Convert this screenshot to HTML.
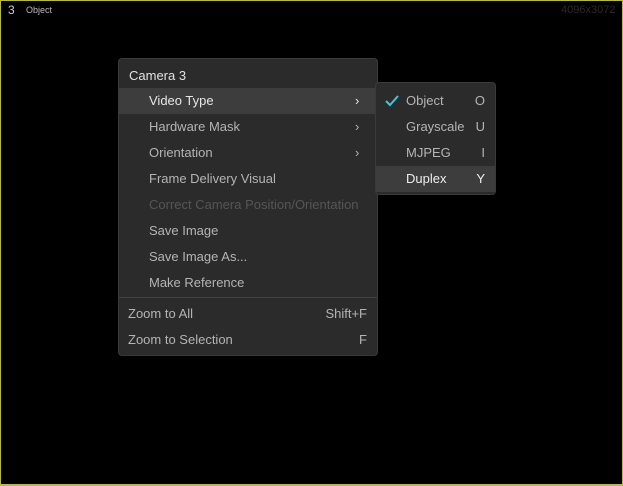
<!DOCTYPE html>
<html><head><style>
*{margin:0;padding:0;box-sizing:border-box}
body{width:623px;height:486px;background:#000;overflow:hidden;position:relative;font-family:"Liberation Sans",sans-serif}
.frame{position:absolute;left:0;top:0;width:623px;height:486px;border:1px solid #b8b84a;border-bottom-width:2px}
.t{position:absolute;white-space:nowrap}
.menu{position:absolute;left:118px;top:58px;width:260px;height:298px;background:#2b2b2b;border-radius:4px;border:1px solid #3a3a3a}
.sub{position:absolute;left:375px;top:82px;width:121px;height:113px;background:#2b2b2b;border-radius:4px;border:1px solid #3a3a3a}
.row{position:absolute;left:0;right:0;height:26px;line-height:26px;font-size:13px;color:#b4b4b4}
.hl{background:#3d3d3d}
</style></head><body>
<div class="frame"></div>
<div class="t" style="left:8px;top:3px;font-size:12px;color:#ccc">3</div>
<div class="t" style="left:26px;top:5px;font-size:9px;color:#bbb">Object</div>
<div class="t" style="left:561px;top:4px;font-size:11px;color:#2a2a2a">4096x3072</div>

<div class="menu">
<div class="row" style="top:4px;color:#e2e2e2"><span style="margin-left:10px">Camera 3</span></div>
<div class="row hl" style="top:29px;color:#e6e6e6"><span style="margin-left:30px">Video Type</span><span style="position:absolute;left:236px">›</span></div>
<div class="row" style="top:55px"><span style="margin-left:30px">Hardware Mask</span><span style="position:absolute;left:236px">›</span></div>
<div class="row" style="top:81px"><span style="margin-left:30px">Orientation</span><span style="position:absolute;left:236px">›</span></div>
<div class="row" style="top:107px"><span style="margin-left:30px">Frame Delivery Visual</span></div>
<div class="row" style="top:133px;color:#555"><span style="margin-left:30px">Correct Camera Position/Orientation</span></div>
<div class="row" style="top:159px"><span style="margin-left:30px">Save Image</span></div>
<div class="row" style="top:185px"><span style="margin-left:30px">Save Image As...</span></div>
<div class="row" style="top:211px"><span style="margin-left:30px">Make Reference</span></div>
<div style="position:absolute;left:0;right:0;top:238px;height:1px;background:#404040"></div>
<div class="row" style="top:242px"><span style="margin-left:9px">Zoom to All</span><span style="position:absolute;right:10px">Shift+F</span></div>
<div class="row" style="top:268px"><span style="margin-left:9px">Zoom to Selection</span><span style="position:absolute;right:10px">F</span></div>
</div>

<div class="sub">
<div class="row" style="top:5px"><svg style="position:absolute;left:9px;top:7px" width="14" height="12" viewBox="0 0 14 12"><path d="M1 6 L5 10 L13 1" stroke="#3cc8e0" stroke-width="2" fill="none"/></svg><span style="margin-left:30px">Object</span><span style="position:absolute;right:10px">O</span></div>
<div class="row" style="top:31px"><span style="margin-left:30px">Grayscale</span><span style="position:absolute;right:10px">U</span></div>
<div class="row" style="top:57px"><span style="margin-left:30px">MJPEG</span><span style="position:absolute;right:10px">I</span></div>
<div class="row hl" style="top:83px;color:#eee"><span style="margin-left:30px">Duplex</span><span style="position:absolute;right:10px">Y</span></div>
</div>
</body></html>
